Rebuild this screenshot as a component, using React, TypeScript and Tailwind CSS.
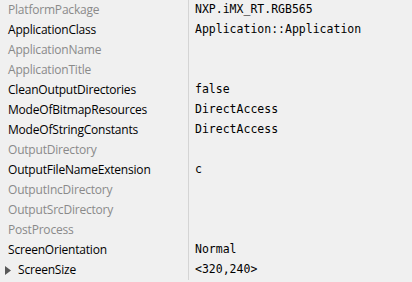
import React from "react";

type Row = { name: string; value?: string; active: boolean; expandable?: boolean };

const rows: Row[] = [
  { name: "PlatformPackage", value: "NXP.iMX_RT.RGB565", active: false },
  { name: "ApplicationClass", value: "Application::Application", active: true },
  { name: "ApplicationName", active: false },
  { name: "ApplicationTitle", active: false },
  { name: "CleanOutputDirectories", value: "false", active: true },
  { name: "ModeOfBitmapResources", value: "DirectAccess", active: true },
  { name: "ModeOfStringConstants", value: "DirectAccess", active: true },
  { name: "OutputDirectory", active: false },
  { name: "OutputFileNameExtension", value: "c", active: true },
  { name: "OutputIncDirectory", active: false },
  { name: "OutputSrcDirectory", active: false },
  { name: "PostProcess", active: false },
  { name: "ScreenOrientation", value: "Normal", active: true },
  { name: "ScreenSize", value: "<320,240>", active: true, expandable: true },
];

export default function App() {
  return (
    <div className="w-[412px] h-[282px] bg-[#f0f0f0] overflow-hidden">
      <div className="flex flex-col">
        {rows.map((r) => (
          <div key={r.name} className="flex h-5">
            <div className="w-[188px] flex items-center pl-2 relative">
              {r.expandable && (
                <svg
                  className="absolute left-[5px] top-[6px]"
                  width="6"
                  height="9"
                  viewBox="0 0 6 9"
                >
                  <path d="M0 0 L6 4.5 L0 9 Z" fill="#595959" />
                </svg>
              )}
              <span
                className={
                  "text-[12px] font-['Open_Sans',sans-serif] tracking-[-0.2px] " +
                  (r.active ? "text-[#000000]" : "text-[#8a8a8a]") +
                  (r.expandable ? " pl-[10px]" : "")
                }
              >
                {r.name}
              </span>
            </div>
            <div className="flex-1 flex items-center border-l border-[#d4d4d4] pl-[6px]">
              <span className="text-[11.5px] font-['DejaVu_Sans_Mono',monospace] text-black">
                {r.value}
              </span>
            </div>
          </div>
        ))}
      </div>
    </div>
  );
}
